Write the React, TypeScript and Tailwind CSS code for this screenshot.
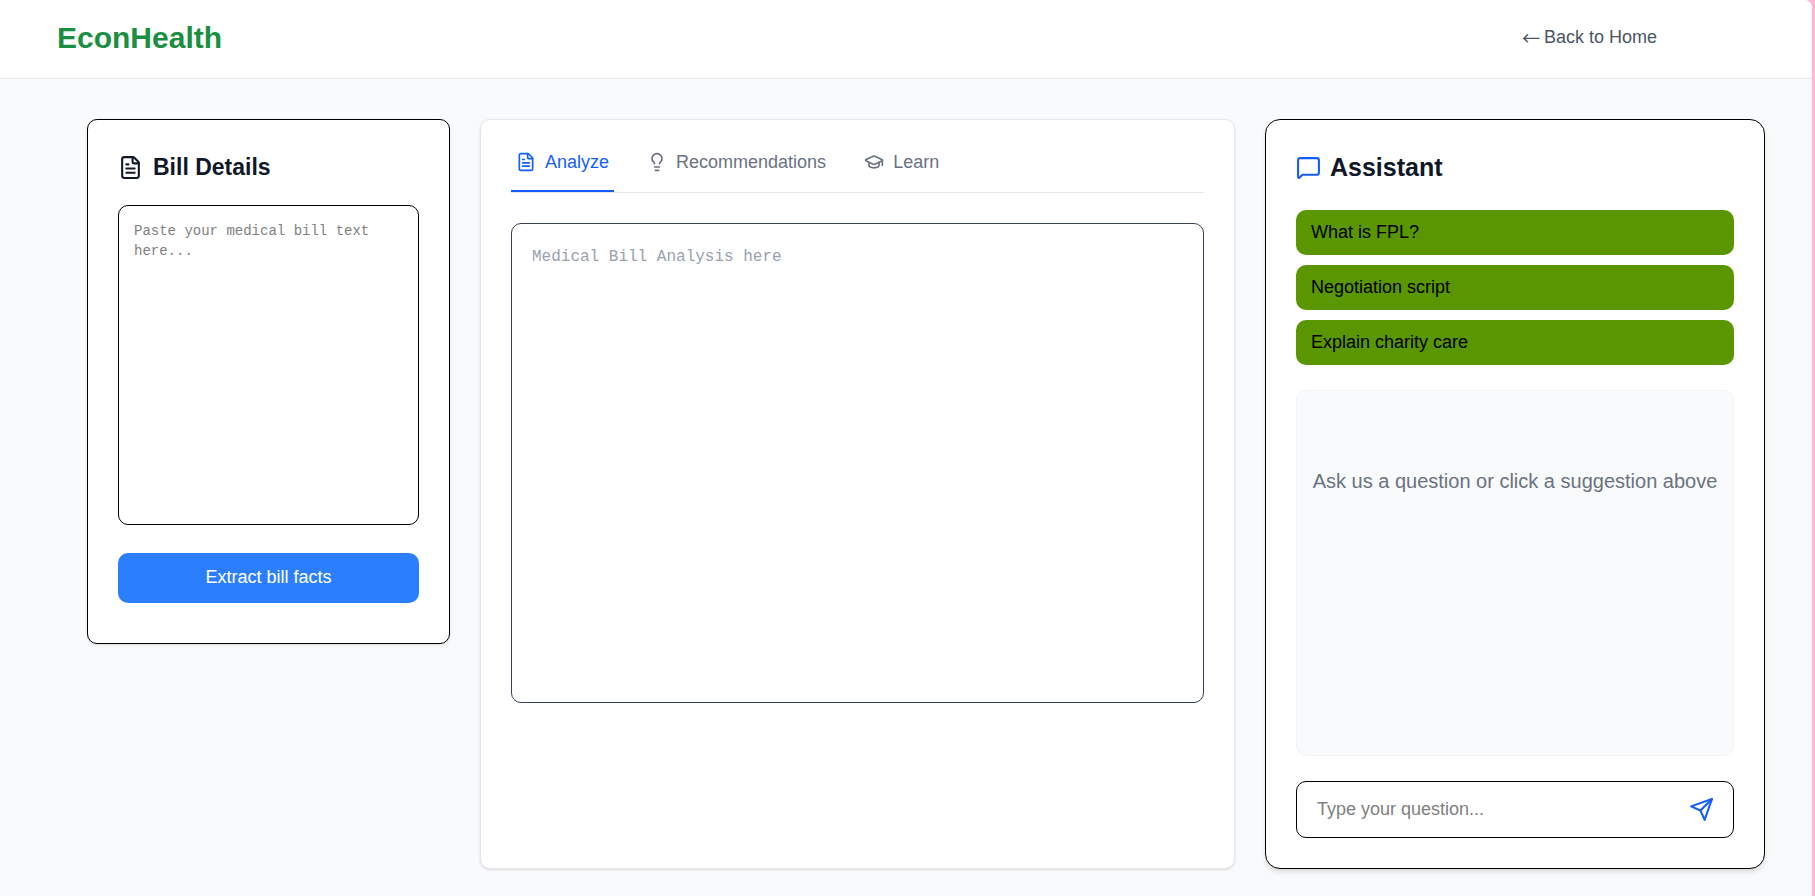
import React from "react";
import { FileText, GraduationCap, Lightbulb, MessageSquare } from "lucide-react";

const suggestions = ["What is FPL?", "Negotiation script", "Explain charity care"];

const tabs = [
  { label: "Analyze", Icon: FileText, active: true },
  { label: "Recommendations", Icon: Lightbulb, active: false },
  { label: "Learn", Icon: GraduationCap, active: false },
];

function SendIcon() {
  return (
    <svg
      width="25"
      height="25"
      viewBox="0 0 24 24"
      fill="none"
      stroke="currentColor"
      strokeWidth="2"
      strokeLinecap="round"
      strokeLinejoin="round"
      aria-hidden="true"
    >
      <path d="m22 2-7 20-4-9-9-4Z" />
      <path d="M22 2 11 13" />
    </svg>
  );
}

function Header() {
  return (
    <header className="flex items-start justify-between border-b border-gray-200 bg-white pt-[15px] pr-[155px] pb-[18px] pl-[57px]">
      <h1 className="text-[30px] leading-[45px] font-bold text-[#1a8f41]">EconHealth</h1>
      <a href="#home" className="flex gap-[4px] text-[18px] leading-[44px] text-gray-600">
        <span className="font-['Noto_Sans_CJK_SC',sans-serif]">←</span>
        Back to Home
      </a>
    </header>
  );
}

function BillDetails() {
  return (
    <section className="rounded-[10px] border border-black bg-white px-[30px] pt-[30px] pb-[40px] shadow-sm">
      <h2 className="mb-[20px] flex items-center gap-[10px] text-[23px] leading-[35px] font-bold text-gray-900">
        <FileText size={25} />
        Bill Details
      </h2>
      <textarea
        aria-label="Medical bill text"
        placeholder="Paste your medical bill text here..."
        className="mb-[28px] block h-[320px] w-full resize-none rounded-[10px] border border-black p-[15px] font-['Liberation_Mono',monospace] text-[14px] leading-[20px] placeholder:text-[#808080]"
      />
      <button type="button" className="h-[50px] w-full rounded-[10px] bg-blue-500 pb-[2px] text-[18px] text-white">
        Extract bill facts
      </button>
    </section>
  );
}

function Workspace() {
  return (
    <section className="h-[750px] rounded-[10px] border border-gray-200 bg-white p-[30px] shadow-sm">
      <div role="tablist" className="mb-[30px] flex gap-[28px] border-b border-gray-200">
        {tabs.map(({ label, Icon, active }) => (
          <button
            key={label}
            type="button"
            role="tab"
            aria-selected={active}
            className={
              active
                ? "flex h-[42px] items-start gap-[9px] border-b-2 border-blue-600 px-[5px] text-[18px] leading-[24px] text-blue-600"
                : "flex h-[42px] items-start gap-[9px] border-b-2 border-transparent px-[5px] text-[18px] leading-[24px] text-gray-500"
            }
          >
            <Icon size={20} className="mt-[2px]" />
            {label}
          </button>
        ))}
      </div>
      <textarea
        readOnly
        aria-label="Analysis"
        placeholder="Medical Bill Analysis here"
        className="block h-[480px] w-full resize-none rounded-[10px] border border-gray-700 p-[20px] font-['Liberation_Mono',monospace] text-[16px] leading-[26px] placeholder:text-gray-400"
      />
    </section>
  );
}

function Assistant() {
  return (
    <section className="flex h-[750px] flex-col rounded-[15px] border border-black bg-white p-[30px] shadow-md">
      <h2 className="mb-[25px] flex items-center gap-[9px] text-[25px] leading-[35px] font-bold text-gray-900">
        <MessageSquare size={25} className="text-blue-600" />
        Assistant
      </h2>
      <div className="mb-[25px] flex flex-col gap-[10px]">
        {suggestions.map((text) => (
          <button
            key={text}
            type="button"
            className="h-[45px] rounded-[10px] bg-[#5a9600] px-[15px] text-left text-[18px] text-black"
          >
            {text}
          </button>
        ))}
      </div>
      <div className="mb-[25px] grow rounded-[10px] border border-gray-100 bg-gray-50 px-[14px] pt-[75px] text-center text-[20px] leading-[30px] text-gray-500">
        Ask us a question or click a suggestion above
      </div>
      <form className="flex h-[57px] items-center rounded-[10px] border border-black pr-[19px] pl-[20px]">
        <input
          type="text"
          aria-label="Your question"
          placeholder="Type your question..."
          className="min-w-0 grow text-[18px] outline-none placeholder:text-[#808080]"
        />
        <button type="button" aria-label="Send" className="text-blue-600">
          <SendIcon />
        </button>
      </form>
    </section>
  );
}

export default function App() {
  return (
    <div className="min-h-screen bg-[#ffb6d0] pr-[3px] font-['Liberation_Sans',Arial,sans-serif]">
      <div className="min-h-screen overflow-hidden rounded-tr-[8px] bg-gray-50">
        <Header />
        <main className="grid grid-cols-[363fr_755fr_500fr] items-start gap-[30px] pt-[40px] pr-[47px] pb-[27px] pl-[87px]">
          <BillDetails />
          <Workspace />
          <Assistant />
        </main>
      </div>
    </div>
  );
}
